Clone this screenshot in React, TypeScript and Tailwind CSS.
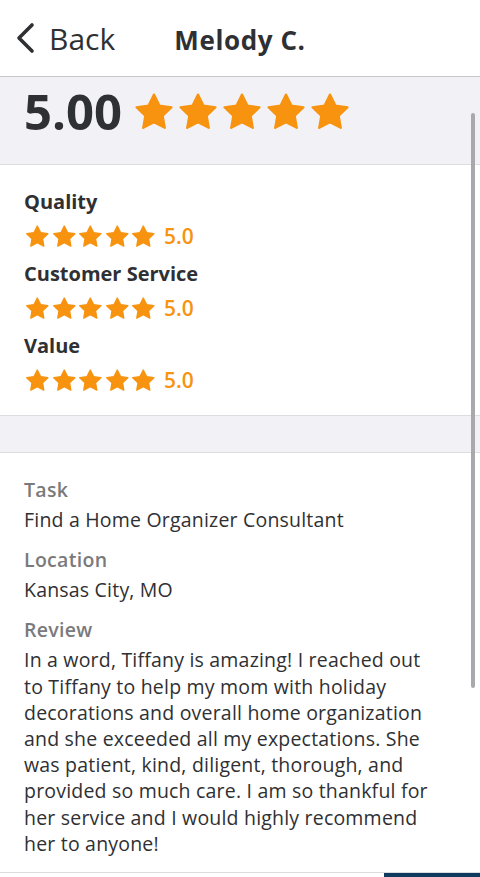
import type { ReactNode } from "react";

const FONT = "font-['Open_Sans','Liberation_Sans',sans-serif]";

const review = [
	"In a word, Tiffany is amazing! I reached out",
	"to Tiffany to help my mom with holiday",
	"decorations and overall home organization",
	"and she exceeded all my expectations. She",
	"was patient, kind, diligent, thorough, and",
	"provided so much care. I am so thankful for",
	"her service and I would highly recommend",
	"her to anyone!",
];

function Star({ className }: { className: string }) {
	return (
		<svg viewBox="0 0 24 24" className={className}>
			<path
				d="M12 2.5l2.95 5.98 6.6.96-4.78 4.65 1.13 6.57L12 17.56l-5.9 3.1 1.13-6.57-4.78-4.65 6.6-.96L12 2.5z"
				fill="#f7930f"
				stroke="#f7930f"
				strokeWidth="1.2"
				strokeLinejoin="round"
			/>
		</svg>
	);
}

function RatingRow({ label }: { label: string }) {
	return (
		<div>
			<div className="text-[20px] font-bold leading-[26px] text-[#2f3033]">{label}</div>
			<div className="mt-[8px] flex items-center">
				{[0, 1, 2, 3, 4].map(i => (
					<Star key={i} className="h-[27px] w-[26.6px]" />
				))}
				<span className="ml-[7px] text-[21px] font-semibold leading-none text-[#f7930f]">5.0</span>
			</div>
		</div>
	);
}

function Field({ label, children }: { label: string; children: ReactNode }) {
	return (
		<div>
			<div className="text-[19.5px] font-semibold leading-[26px] tracking-[0.3px] text-[#7a7a7d]">{label}</div>
			<div className="mt-[4px] text-[19.5px] leading-[26.2px] tracking-[0.2px] text-[#2f3033]">{children}</div>
		</div>
	);
}

export default function App() {
	return (
		<div className={`relative h-[877px] w-[480px] overflow-hidden bg-white ${FONT}`}>
			{/* Header */}
			<header className="grid h-[77px] grid-cols-[1fr_auto_1fr] items-center border-b border-[#c8c8cc]">
				<div className="flex items-center pl-[14px] text-[#2f3033]">
					<svg viewBox="0 0 24 32" className="h-[32px] w-[24px]">
						<path d="M18 3L5 16l13 13" fill="none" stroke="#2f3033" strokeWidth="3.6" strokeLinecap="round" strokeLinejoin="round" />
					</svg>
					<span className="ml-[11px] mt-[2px] text-[30px] leading-none">Back</span>
				</div>
				<h1 className="mt-[4px] text-[26px] font-bold tracking-[0.6px] text-[#2f3033]">Melody C.</h1>
				<div />
			</header>

			{/* Overall */}
			<section className="h-[88px] border-b border-[#dcdce0] bg-[#f1f1f6] px-[24px] pt-[10px]">
				<div className="flex items-center">
					<span className="text-[49px] font-bold leading-none text-[#2f3033]">5.00</span>
					<div className="ml-[10px] flex">
						{[0, 1, 2, 3, 4].map(i => (
							<Star key={i} className="h-[44px] w-[44px]" />
						))}
					</div>
				</div>
			</section>

			{/* Categories */}
			<section className="flex h-[251px] flex-col gap-[11px] border-b border-[#dcdce0] px-[24px] pt-[24px]">
				<RatingRow label="Quality" />
				<RatingRow label="Customer Service" />
				<RatingRow label="Value" />
			</section>

			<div className="h-[37px] border-b border-[#dcdce0] bg-[#f1f1f6]" />

			{/* Details */}
			<section className="flex flex-col gap-[14px] px-[24px] pt-[24px]">
				<Field label="Task">Find a Home Organizer Consultant</Field>
				<Field label="Location">Kansas City, MO</Field>
				<Field label="Review">
					{review.map(line => (
						<div key={line}>{line}</div>
					))}
				</Field>
				<Field label="Reviewed">Dec 2021</Field>
			</section>

			{/* Scroll indicator */}
			<div className="absolute left-[471px] top-[113px] h-[575px] w-[4px] rounded-full bg-[#a9a9ad]" />

			{/* Bottom bar */}
			<div className="absolute left-0 top-[872px] flex h-[80px] w-full border-t border-[#dcdce0] bg-white">
				<div className="ml-auto h-full w-[96px] bg-[#0f3a5f]" />
			</div>
		</div>
	);
}
